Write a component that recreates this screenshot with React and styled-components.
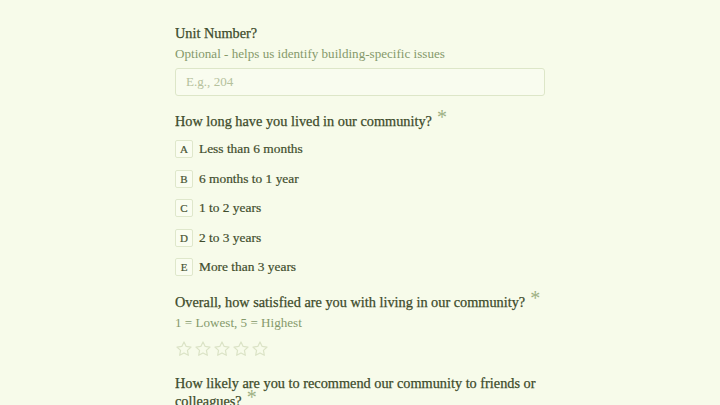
import React from 'react';
import styled, { createGlobalStyle } from 'styled-components';

const Global = createGlobalStyle`
  html, body {
    margin: 0;
    padding: 0;
    background: #f7fbea;
  }
  body {
    font-family: "Liberation Serif", "DejaVu Serif", serif;
    color: #3d4b2a;
  }
`;

const Page = styled.div`
  width: 370px;
  margin: 0 auto;
  padding-top: 24px;
  display: flex;
  flex-direction: column;
  height: 381px;
  overflow: hidden;
`;

const Section = styled.div`
  display: flex;
  flex-direction: column;
  margin-top: ${p => p.$gap || 0}px;
`;

const Question = styled.div`
  font-size: 14.3px;
  line-height: 18px;
  color: #3d4b2a;
  -webkit-text-stroke: 0.25px #3d4b2a;
`;

const Star = styled.span`
  color: #9db083;
  font-size: 20px;
  line-height: 0;
  margin-left: 5px;
  position: relative;
  top: -2px;
  -webkit-text-stroke: 0;
`;

const Hint = styled.div`
  font-size: 13.1px;
  line-height: 20px;
  margin-top: 2px;
  color: #85996a;
`;

const Input = styled.input`
  margin-top: 4px;
  height: 28px;
  box-sizing: border-box;
  border: 1px solid #dde6c8;
  border-radius: 3px;
  background: #f9fcef;
  padding: 0 10px;
  font-family: inherit;
  font-size: 13.1px;
  color: #3d4b2a;
  outline: none;
  &::placeholder {
    color: #b5c19c;
  }
`;

const Options = styled.div`
  display: flex;
  flex-direction: column;
  gap: 11.5px;
  margin-top: 10px;
`;

const Option = styled.div`
  display: flex;
  align-items: center;
  gap: 6px;
  height: 18px;
  font-size: 13.4px;
  color: #3f4d2c;
  -webkit-text-stroke: 0.2px #3f4d2c;
`;

const Key = styled.span`
  width: 18px;
  height: 18px;
  box-sizing: border-box;
  border: 1px solid #dfe7cb;
  border-radius: 2px;
  background: #fafdf0;
  display: flex;
  align-items: center;
  justify-content: center;
  font-size: 11px;
  color: #4a5636;
`;

const Rating = styled.div`
  display: flex;
  gap: 1px;
  margin-top: 7px;
`;

const StarIcon = () => (
  <svg width="18" height="18" viewBox="0 0 24 24" fill="none" stroke="#dbe3c6" strokeWidth="1.6" strokeLinejoin="round">
    <path d="M12 2.6l2.9 6 6.5.8-4.8 4.5 1.2 6.5L12 17.3l-5.8 3.1 1.2-6.5-4.8-4.5 6.5-.8z" />
  </svg>
);

const choices = [
  ['A', 'Less than 6 months'],
  ['B', '6 months to 1 year'],
  ['C', '1 to 2 years'],
  ['D', '2 to 3 years'],
  ['E', 'More than 3 years'],
];

export default function App() {
  return (
    <>
      <Global />
      <Page>
        <Section>
          <Question>Unit Number?</Question>
          <Hint>Optional - helps us identify building-specific issues</Hint>
          <Input placeholder="E.g., 204" />
        </Section>

        <Section $gap={16}>
          <Question>How long have you lived in our community?<Star>*</Star></Question>
          <Options>
            {choices.map(([k, label]) => (
              <Option key={k}>
                <Key>{k}</Key>
                {label}
              </Option>
            ))}
          </Options>
        </Section>

        <Section $gap={17}>
          <Question>Overall, how satisfied are you with living in our community?<Star>*</Star></Question>
          <Hint>1 = Lowest, 5 = Highest</Hint>
          <Rating>
            {[1, 2, 3, 4, 5].map(n => <StarIcon key={n} />)}
          </Rating>
        </Section>

        <Section $gap={16}>
          <Question>How likely are you to recommend our community to friends or colleagues?<Star>*</Star></Question>
        </Section>
      </Page>
    </>
  );
}
